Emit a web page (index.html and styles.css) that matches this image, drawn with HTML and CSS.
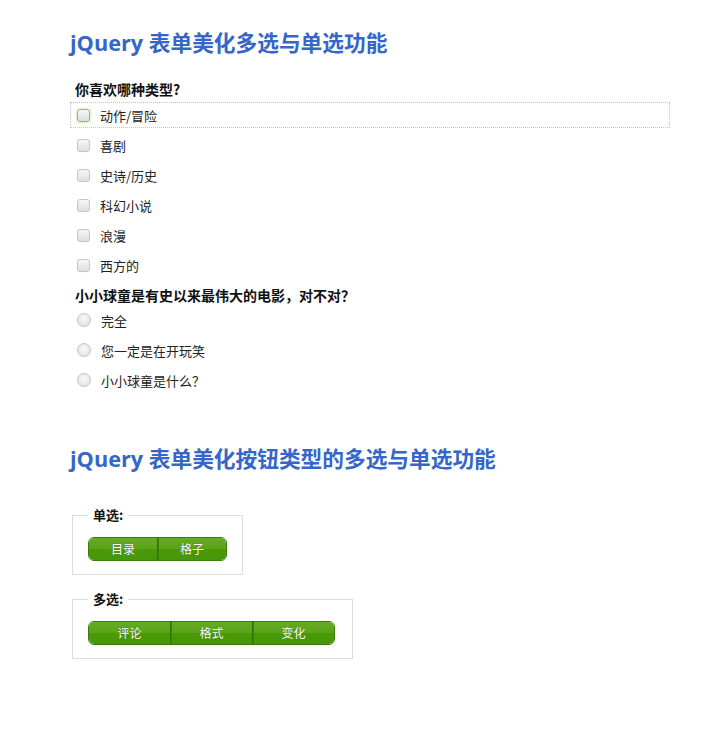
FILE: index.html
```html
<!DOCTYPE html>
<html lang="zh-CN">
<head>
    <meta charset="UTF-8">
    <title>jQuery 表单美化多选与单选功能</title>
    <link rel="stylesheet" href="styles.css">
</head>
<body>
    <div class="page">
        <h1 class="title">jQuery 表单美化多选与单选功能</h1>
        <form class="pretty-form">
            <p class="question">你喜欢哪种类型?</p>
            <label class="option focused"><input type="checkbox" class="check"><span>动作/冒险</span></label>
            <label class="option"><input type="checkbox" class="check"><span>喜剧</span></label>
            <label class="option"><input type="checkbox" class="check"><span>史诗/历史</span></label>
            <label class="option"><input type="checkbox" class="check"><span>科幻小说</span></label>
            <label class="option"><input type="checkbox" class="check"><span>浪漫</span></label>
            <label class="option"><input type="checkbox" class="check"><span>西方的</span></label>

            <p class="question second">小小球童是有史以来最伟大的电影，对不对？</p>
            <label class="option"><input type="radio" name="caddy" class="radio"><span>完全</span></label>
            <label class="option"><input type="radio" name="caddy" class="radio"><span>您一定是在开玩笑</span></label>
            <label class="option"><input type="radio" name="caddy" class="radio"><span>小小球童是什么？</span></label>
        </form>

        <h1 class="title title-buttons">jQuery 表单美化按钮类型的多选与单选功能</h1>
        <div class="button-forms">
            <fieldset class="group">
                <legend>单选:</legend>
                <div class="btn-set two">
                    <span class="btn">目录</span>
                    <span class="btn">格子</span>
                </div>
            </fieldset>
            <fieldset class="group wide">
                <legend>多选:</legend>
                <div class="btn-set three">
                    <span class="btn">评论</span>
                    <span class="btn">格式</span>
                    <span class="btn">变化</span>
                </div>
            </fieldset>
        </div>
    </div>
</body>
</html>
```

FILE: styles.css
```css
body {
    margin: 0;
    font-family: "Noto Sans CJK SC", "Noto Sans", sans-serif;
    color: #222;
    background: #fff;
}
.page {
    padding: 28px 0 40px 70px;
    width: 600px;
}
.title {
    margin: 0;
    font-family: "Open Sans", "Noto Sans CJK SC", sans-serif;
    font-size: 21.7px;
    line-height: 30px;
    font-weight: bold;
    color: #3566c8;
}
.pretty-form {
    display: flex;
    flex-direction: column;
    margin-top: 23px;
}
.question {
    margin: 0 0 3px 5px;
    font-size: 14px;
    line-height: 16px;
    font-weight: bold;
    color: #111;
}
.question.second {
    margin-top: 7px;
    margin-bottom: 2px;
}
.option {
    display: flex;
    align-items: center;
    gap: 10px;
    height: 24px;
    margin: 2px 0;
    padding-left: 6px;
    border: 1px dotted transparent;
    font-size: 13px;
    color: #222;
}
.option.focused {
    border-color: #c4c4c4;
}
.check,
.radio {
    appearance: none;
    -webkit-appearance: none;
    margin: 0;
    width: 13px;
    height: 13px;
    border: 1px solid #c6c6c6;
    border-radius: 3px;
    background: linear-gradient(#f6f6f6, #dedede);
    box-shadow: 0 0 1px #e8e8e8;
}
.radio {
    width: 14px;
    height: 14px;
    border-radius: 50%;
    background: radial-gradient(circle at 50% 40%, #fafafa, #dcdcdc);
}
.focused .check {
    border-color: #93c052;
    box-shadow: 0 0 3px #b4dc7c;
}
.title-buttons {
    margin-top: 49px;
}
.button-forms {
    display: flex;
    flex-direction: column;
    align-items: flex-start;
    gap: 16px;
    margin-top: 33px;
    margin-left: 2px;
}
.group {
    margin: 0;
    padding: 14px 15px 13px;
    border: 1px solid #dcdcdc;
}
.group.wide {
    padding-right: 17px;
}
.group legend {
    padding: 0 5px;
    font-size: 13px;
    line-height: 16px;
    font-weight: bold;
    color: #111;
}
.btn-set {
    display: flex;
    border: 1px solid #3b7d0c;
    border-radius: 6px;
    overflow: hidden;
}
.btn {
    height: 22px;
    line-height: 22px;
    text-align: center;
    font-size: 12px;
    color: #fff;
    text-shadow: 0 0 1px #2c5f05;
    background: linear-gradient(#65ab24 0%, #5ba31b 50%, #4b9a04 50%, #46960a 100%);
    border-left: 1px solid #336f08;
    box-shadow: inset 1px 0 0 #3f820e;
}
.btn:first-child {
    border-left: none;
    box-shadow: none;
}
.two .btn {
    width: 68px;
}
.three .btn {
    width: 81px;
}
```
